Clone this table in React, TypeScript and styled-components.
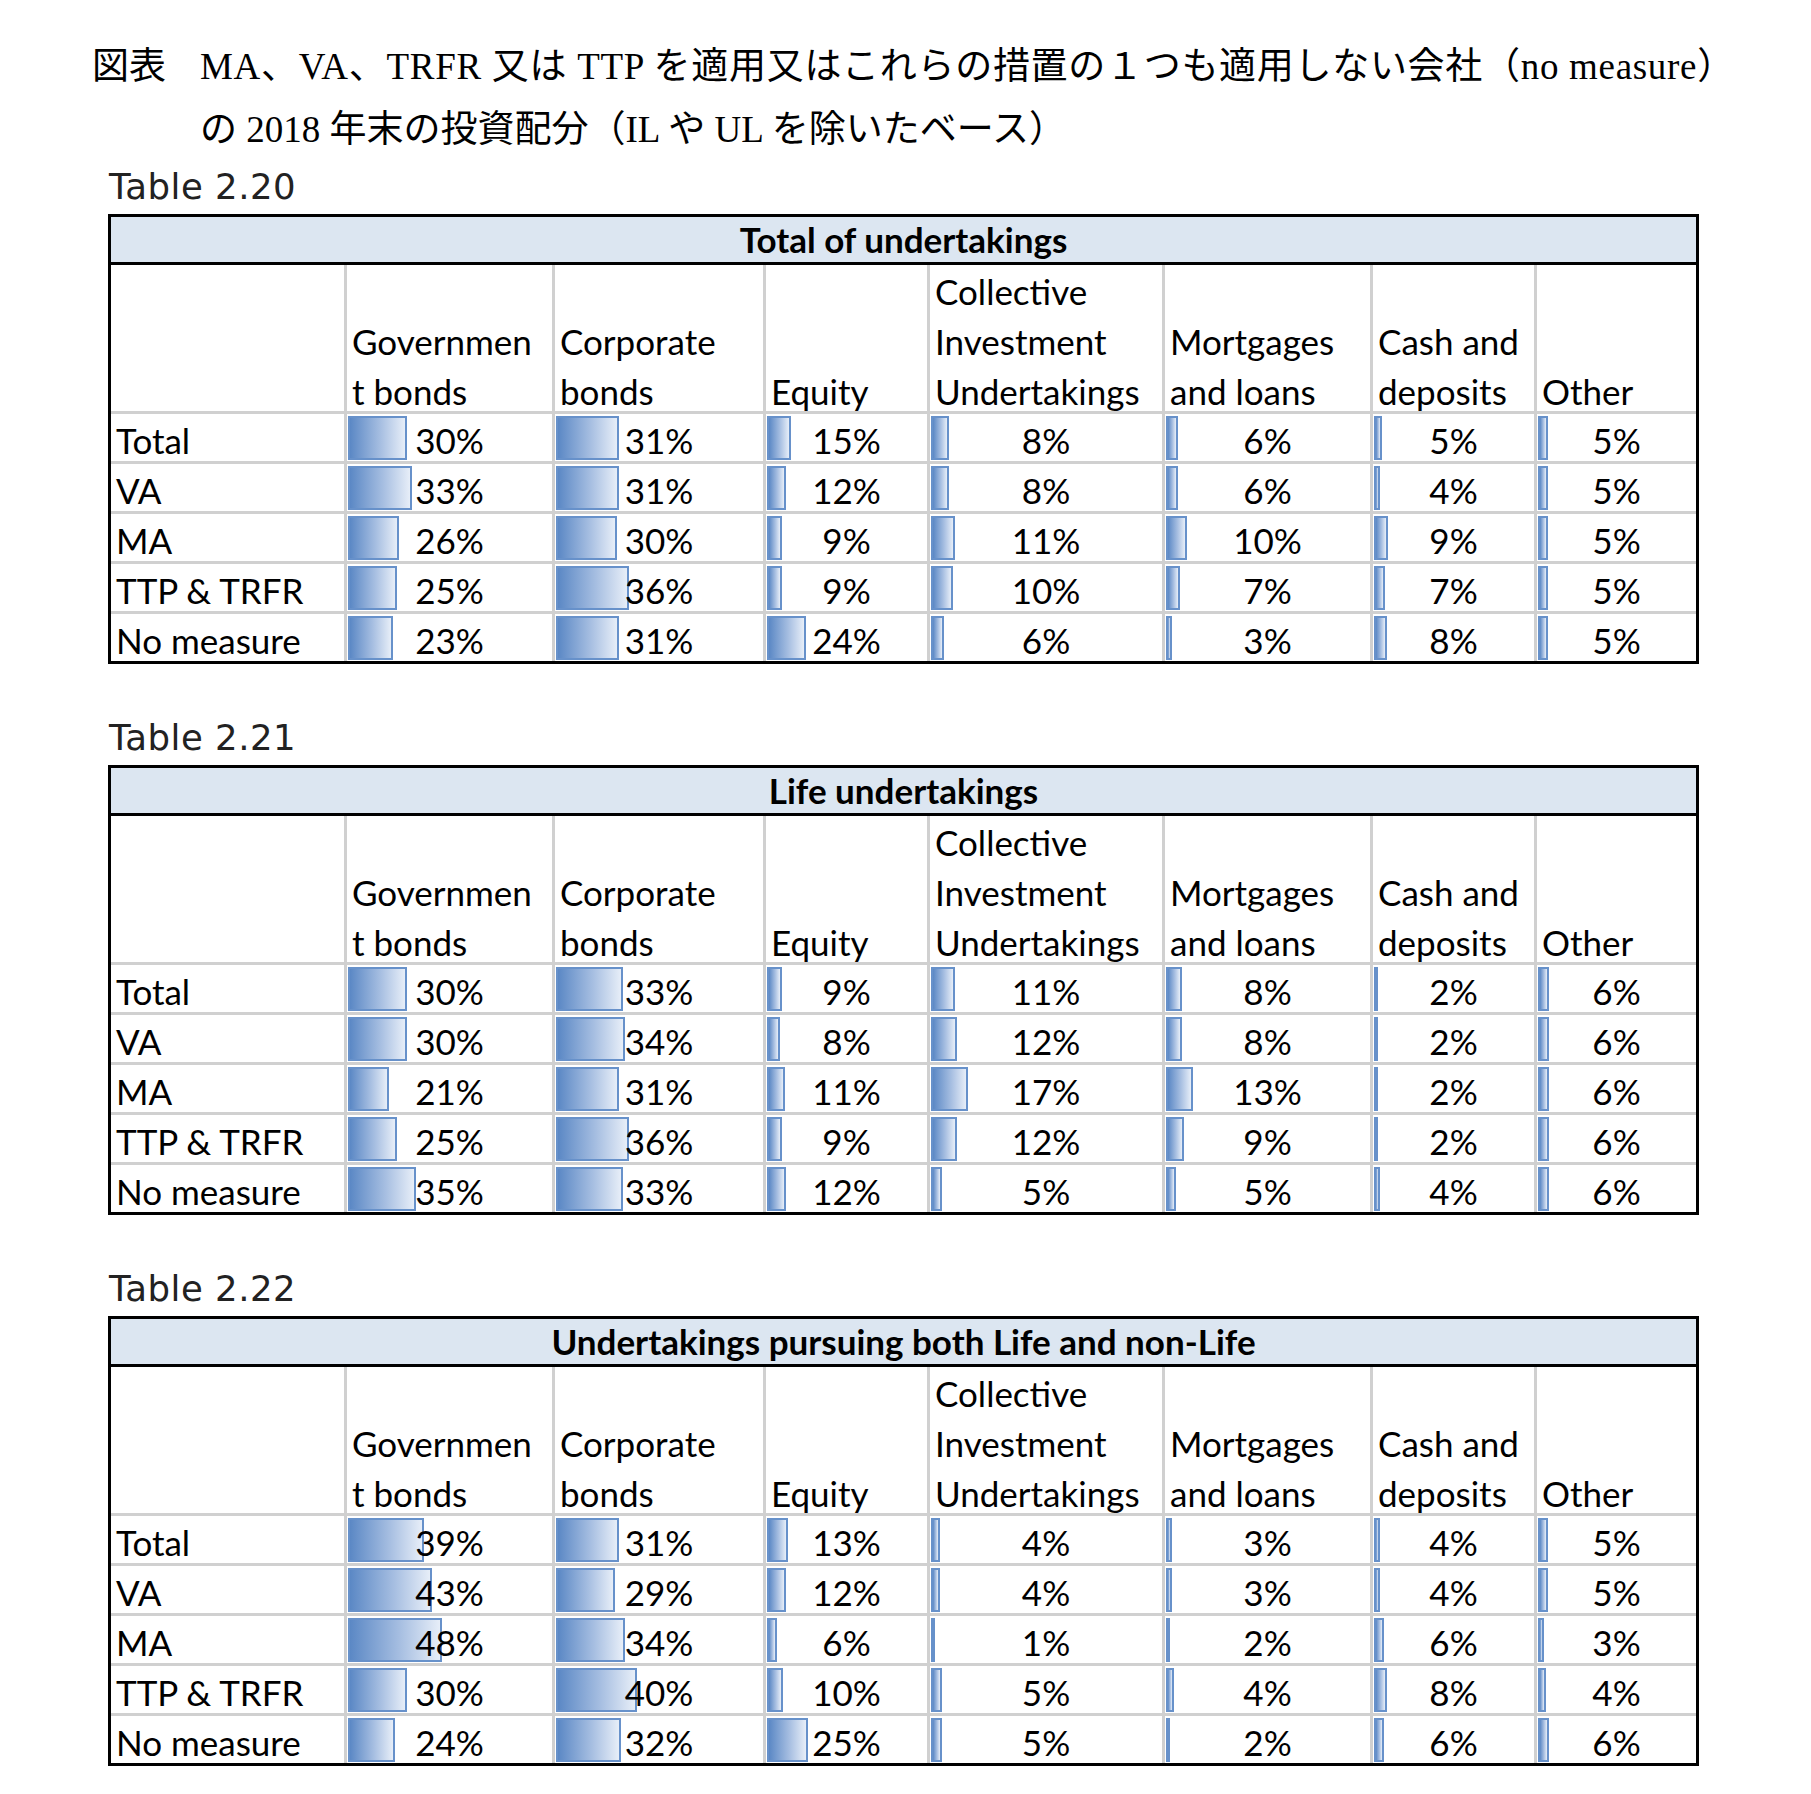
import React from "react";
import styled, { createGlobalStyle } from "styled-components";

const GlobalStyle = createGlobalStyle`
  html, body {
    margin: 0;
    padding: 0;
    background: #ffffff;
  }
`;

type Row = { label: string; values: number[] };
type TableData = { id: string; title: string; rows: Row[] };

const COLUMNS: { lines: string[]; scale: number }[] = [
  { lines: ["Governmen", "t bonds"], scale: 1.95 },
  { lines: ["Corporate", "bonds"], scale: 2.03 },
  { lines: ["Equity"], scale: 1.62 },
  { lines: ["Collective", "Investment", "Undertakings"], scale: 2.2 },
  { lines: ["Mortgages", "and loans"], scale: 2.05 },
  { lines: ["Cash and", "deposits"], scale: 1.6 },
  { lines: ["Other"], scale: 1.9 },
];

const TABLES: TableData[] = [
  {
    id: "Table 2.20",
    title: "Total of undertakings",
    rows: [
      { label: "Total", values: [30, 31, 15, 8, 6, 5, 5] },
      { label: "VA", values: [33, 31, 12, 8, 6, 4, 5] },
      { label: "MA", values: [26, 30, 9, 11, 10, 9, 5] },
      { label: "TTP & TRFR", values: [25, 36, 9, 10, 7, 7, 5] },
      { label: "No measure", values: [23, 31, 24, 6, 3, 8, 5] },
    ],
  },
  {
    id: "Table 2.21",
    title: "Life undertakings",
    rows: [
      { label: "Total", values: [30, 33, 9, 11, 8, 2, 6] },
      { label: "VA", values: [30, 34, 8, 12, 8, 2, 6] },
      { label: "MA", values: [21, 31, 11, 17, 13, 2, 6] },
      { label: "TTP & TRFR", values: [25, 36, 9, 12, 9, 2, 6] },
      { label: "No measure", values: [35, 33, 12, 5, 5, 4, 6] },
    ],
  },
  {
    id: "Table 2.22",
    title: "Undertakings pursuing both Life and non-Life",
    rows: [
      { label: "Total", values: [39, 31, 13, 4, 3, 4, 5] },
      { label: "VA", values: [43, 29, 12, 4, 3, 4, 5] },
      { label: "MA", values: [48, 34, 6, 1, 2, 6, 3] },
      { label: "TTP & TRFR", values: [30, 40, 10, 5, 4, 8, 4] },
      { label: "No measure", values: [24, 32, 25, 5, 2, 6, 6] },
    ],
  },
];

const Page = styled.main`
  padding: 35px 0 40px;
  width: 1811px;
  box-sizing: border-box;
`;

const Caption = styled.header`
  margin-left: 92px;
  display: grid;
  grid-template-columns: 108px auto;
  font-family: "Liberation Serif", "Noto Sans CJK JP", serif;
  font-size: 37px;
  line-height: 63px;
  color: #000;
`;

const CaptionLabel = styled.span`
  white-space: nowrap;
`;

const CaptionText = styled.div`
  display: flex;
  flex-direction: column;
`;

const CaptionLine = styled.span<{ $spacing?: number }>`
  white-space: nowrap;
  letter-spacing: ${(p) => p.$spacing ?? 0}px;
`;

const Sections = styled.div`
  margin-left: 108px;
  margin-top: 4px;
  display: flex;
  flex-direction: column;
  gap: 52px;
`;

const Section = styled.section`
  display: flex;
  flex-direction: column;
  gap: 5px;
`;

const TableLabel = styled.h2`
  margin: 0;
  padding-left: 1px;
  font-family: "DejaVu Sans", Verdana, sans-serif;
  font-weight: 400;
  font-size: 35.5px;
  letter-spacing: 0.5px;
  line-height: 44px;
  color: #222;
`;

const Frame = styled.div`
  width: 1591px;
  box-sizing: border-box;
  border: 3px solid #000;
  font-family: Lato, "Liberation Sans", sans-serif;
  font-size: 35px;
  color: #000;
`;

const Banner = styled.div`
  height: 45px;
  line-height: 45px;
  text-align: center;
  font-weight: 700;
  background: #dce6f1;
  border-bottom: 3px solid #000;
  white-space: nowrap;
`;

const Grid = styled.div`
  display: grid;
  grid-template-columns: 233px 205px 208px 161px 232px 205px 161px 159px;
  grid-template-rows: 146px repeat(5, 47px);
  gap: 3px;
  background: #d0d0d0;
`;

const HeadCell = styled.div`
  background: #fff;
  display: flex;
  flex-direction: column;
  justify-content: flex-end;
  padding: 0 5px;
  line-height: 50px;
  white-space: nowrap;
  min-width: 0;
`;

const HeadLines = styled.div`
  margin-bottom: -5px;
  display: flex;
  flex-direction: column;
`;

const LabelCell = styled.div`
  background: #fff;
  padding: 6px 5px 0;
  line-height: 40px;
  white-space: nowrap;
`;

const ValueCell = styled.div`
  position: relative;
  background: #fff;
  padding-top: 6px;
  line-height: 40px;
  text-align: center;
  white-space: nowrap;
`;

const Bar = styled.span`
  position: absolute;
  left: 1px;
  top: 2px;
  bottom: 1px;
  box-sizing: border-box;
  border: 2px solid #6791ca;
  background: linear-gradient(to right, #5b88c5 0%, #a6bee1 55%, #e7eef8 100%);
`;

const Value = styled.span`
  position: relative;
  z-index: 1;
`;

function DataTable({ data }: { data: TableData }) {
  return (
    <Section>
      <TableLabel>{data.id}</TableLabel>
      <Frame>
        <Banner>{data.title}</Banner>
        <Grid>
          <HeadCell />
          {COLUMNS.map((c, i) => (
            <HeadCell key={i}>
              <HeadLines>
                {c.lines.map((l, j) => (
                  <span key={j}>{l}</span>
                ))}
              </HeadLines>
            </HeadCell>
          ))}
          {data.rows.map((r) => (
            <React.Fragment key={r.label}>
              <LabelCell>{r.label}</LabelCell>
              {r.values.map((v, i) => (
                <ValueCell key={i}>
                  <Bar style={{ width: Math.max(3, Math.round(v * COLUMNS[i].scale)) }} />
                  <Value>{v}%</Value>
                </ValueCell>
              ))}
            </React.Fragment>
          ))}
        </Grid>
      </Frame>
    </Section>
  );
}

export default function App() {
  return (
    <Page>
      <GlobalStyle />
      <Caption>
        <CaptionLabel>図表</CaptionLabel>
        <CaptionText>
          <CaptionLine $spacing={0.7}>MA、VA、TRFR 又は TTP を適用又はこれらの措置の１つも適用しない会社（no measure）</CaptionLine>
          <CaptionLine>の 2018 年末の投資配分（IL や UL を除いたベース）</CaptionLine>
        </CaptionText>
      </Caption>
      <Sections>
        {TABLES.map((t) => (
          <DataTable key={t.id} data={t} />
        ))}
      </Sections>
    </Page>
  );
}
